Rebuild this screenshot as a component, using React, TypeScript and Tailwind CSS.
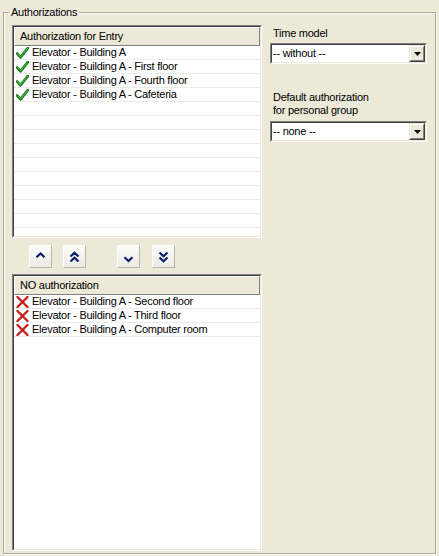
import React from 'react';

const allowed = [
    'Elevator - Building A',
    'Elevator - Building A - First floor',
    'Elevator - Building A - Fourth floor',
    'Elevator - Building A - Cafeteria',
];

const denied = [
    'Elevator - Building A - Second floor',
    'Elevator - Building A - Third floor',
    'Elevator - Building A - Computer room',
];

const CheckIcon: React.FC = () => (
    <svg width="13" height="12" viewBox="0 0 13 12">
        <path d="M1.2 6.6 L4.6 10.2 L11.8 1.2" fill="none" stroke="#1f7a1f" strokeWidth="2.8" strokeLinecap="round" strokeLinejoin="round" />
        <path d="M1.6 6.6 L4.6 9.6 L11.4 1.4" fill="none" stroke="#3fae3f" strokeWidth="1.1" strokeLinecap="round" strokeLinejoin="round" />
    </svg>
);

const CrossIcon: React.FC = () => (
    <svg width="13" height="12" viewBox="0 0 13 12">
        <path d="M1.5 1 L11.5 11 M11.5 1 L1.5 11" fill="none" stroke="#c8201e" strokeWidth="2.4" strokeLinecap="round" />
    </svg>
);

const Chevron: React.FC<{ dir: 'up' | 'down'; double?: boolean }> = ({ dir, double }) => {
    const up = dir === 'up';
    return (
        <svg width="11" height="12" viewBox="0 0 11 12">
            {double ? (
                up ? (
                    <path d="M1.5 5.5 L5.5 1.8 L9.5 5.5 M1.5 10.5 L5.5 6.8 L9.5 10.5" fill="none" stroke="#0b1e6e" strokeWidth="2.2" />
                ) : (
                    <path d="M1.5 1.5 L5.5 5.2 L9.5 1.5 M1.5 6.5 L5.5 10.2 L9.5 6.5" fill="none" stroke="#0b1e6e" strokeWidth="2.2" />
                )
            ) : up ? (
                <path d="M1.5 6.2 L5.5 2.4 L9.5 6.2" fill="none" stroke="#0b1e6e" strokeWidth="2.2" />
            ) : (
                <path d="M1.5 6.3 L5.5 10.1 L9.5 6.3" fill="none" stroke="#0b1e6e" strokeWidth="2.2" />
            )}
        </svg>
    );
};

const NavButton: React.FC<{ dir: 'up' | 'down'; double?: boolean; className?: string }> = ({ dir, double, className }) => (
    <button
        type="button"
        className={
            'w-[23px] h-[23px] flex items-center justify-center bg-gradient-to-b from-[#fbfbf9] to-[#eceae4] border border-t-white border-l-white border-b-[#b8b5a8] border-r-[#b8b5a8] ' +
            (className ?? '')
        }
    >
        <Chevron dir={dir} double={double} />
    </button>
);

const ListBox: React.FC<{ title: string; items: string[]; icon: 'ok' | 'no'; fillRows: number; height: string }> = ({
    title,
    items,
    icon,
    fillRows,
    height,
}) => (
    <div className={'border border-t-[#808080] border-l-[#808080] border-b-white border-r-white ' + height}>
        <div className="h-full border border-t-[#404040] border-l-[#404040] border-b-[#ece9d8] border-r-[#ece9d8] bg-white flex flex-col overflow-hidden">
            <div className="h-[19px] shrink-0 bg-[#ece9d8] border border-t-white border-l-white border-b-[#808080] border-r-[#808080] pl-[5px] leading-[16px]">
                {title}
            </div>
            {items.map(item => (
                <div key={item} className="h-[14px] shrink-0 border-b border-[#ebebeb] flex items-center pl-[2px] gap-[3px] leading-[13px]">
                    {icon === 'ok' ? <CheckIcon /> : <CrossIcon />}
                    <span className="whitespace-nowrap">{item}</span>
                </div>
            ))}
            {Array.from({ length: fillRows }).map((_, i) => (
                <div key={i} className="h-[14px] shrink-0 border-b border-[#ebebeb]" />
            ))}
        </div>
    </div>
);

const Combo: React.FC<{ value: string }> = ({ value }) => (
    <div className="w-[157px] h-[21px] border border-t-[#808080] border-l-[#808080] border-b-white border-r-white">
        <div className="h-full border border-t-[#404040] border-l-[#404040] border-b-[#ece9d8] border-r-[#ece9d8] bg-white flex items-center">
            <span className="flex-1 pl-[1px] leading-[13px] whitespace-nowrap">{value}</span>
            <div className="w-[16px] h-full border border-t-[#ece9d8] border-l-[#ece9d8] border-b-[#404040] border-r-[#404040]">
                <div className="h-full bg-[#ece9d8] border border-t-white border-l-white border-b-[#808080] border-r-[#808080] flex items-center justify-center">
                    <svg width="7" height="4" viewBox="0 0 7 4">
                        <path d="M0 0 H7 L3.5 4 Z" fill="#000" />
                    </svg>
                </div>
            </div>
        </div>
    </div>
);

const App: React.FC = () => {
    return (
        <div className="w-[439px] h-[556px] bg-[#ece9d8] px-[3px] pt-[6px] text-[11px] tracking-[-0.25px] text-black font-['Liberation_Sans',Arial,sans-serif]">
            <fieldset className="h-[548px] border border-[#aca899] shadow-[inset_1px_1px_0_#fff,1px_1px_0_#fff]">
                <legend className="ml-[5px] px-[2px] leading-[13px]">Authorizations</legend>

                <div className="flex gap-[8px] pl-[8px] pt-[6px]">
                    <div className="w-[250px] flex flex-col">
                        <ListBox title="Authorization for Entry" items={allowed} icon="ok" fillRows={9} height="h-[213px]" />

                        <div className="flex mt-[7px] pl-[17px]">
                            <NavButton dir="up" />
                            <NavButton dir="up" double className="ml-[11px]" />
                            <NavButton dir="down" className="ml-[31px]" />
                            <NavButton dir="down" double className="ml-[12px]" />
                        </div>

                        <ListBox title="NO authorization" items={denied} icon="no" fillRows={0} height="h-[277px] mt-[6px]" />
                    </div>

                    <div className="w-[157px] flex flex-col pt-[2px]">
                        <div className="leading-[13px] pl-[3px]">Time model</div>
                        <div className="mt-[3px]">
                            <Combo value="-- without --" />
                        </div>

                        <div className="mt-[27px] pl-[3px] leading-[13px]">
                            Default authorization
                            <br />
                            for personal group
                        </div>
                        <div className="mt-[4px]">
                            <Combo value="-- none --" />
                        </div>
                    </div>
                </div>
            </fieldset>
        </div>
    );
};

export default App;
